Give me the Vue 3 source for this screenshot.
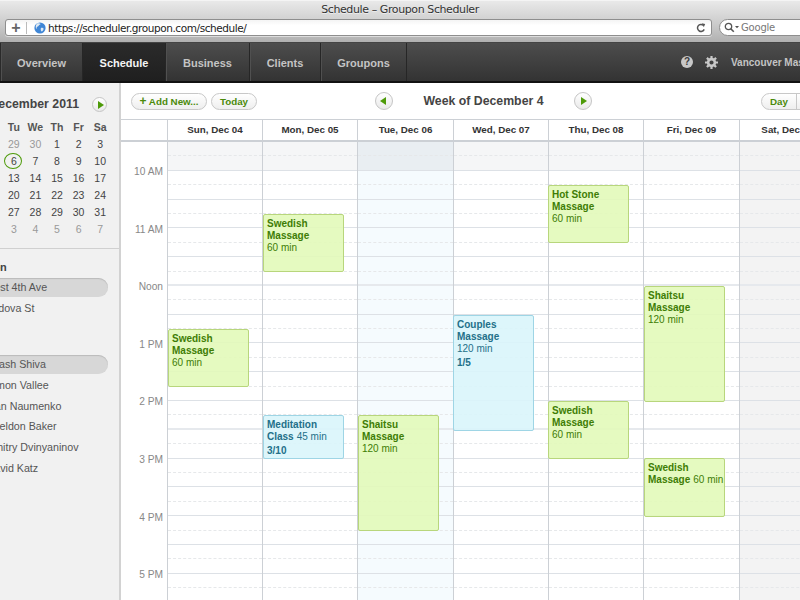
<script setup>
const tabs = [
  { label: 'Overview', w: 82 },
  { label: 'Schedule', w: 83, active: true },
  { label: 'Business', w: 84 },
  { label: 'Clients', w: 71 },
  { label: 'Groupons', w: 86 },
]
const weekdays = ['Tu', 'We', 'Th', 'Fr', 'Sa']
const calRows = [
  [[29, 1], [30, 1], [1], [2], [3]],
  [[6, 0, 1], [7], [8], [9], [10]],
  [[13], [14], [15], [16], [17]],
  [[20], [21], [22], [23], [24]],
  [[27], [28], [29], [30], [31]],
  [[3, 1], [4, 1], [5, 1], [6, 1], [7, 1]],
]
const staff = ['Akash Shiva', 'Simon Vallee', 'Ivan Naumenko', 'Sheldon Baker', 'Dmitry Dvinyaninov', 'David Katz']
const hours = ['10 AM', '11 AM', 'Noon', '1 PM', '2 PM', '3 PM', '4 PM', '5 PM']
const rows = Array.from({ length: 32 }, (_, i) => i)
const rowClass = (i) => (i === 9 || i === 19 ? 'solid thick' : i % 2 ? 'solid' : 'dash')

const days = [
  { name: 'Sun, Dec 04', w: 95, shift: 0, events: [{ l1: 'Swedish', l2: 'Massage', l3: '60 min', y: 329, h: 58 }] },
  { name: 'Mon, Dec 05', w: 95, shift: 0, events: [
    { l1: 'Swedish', l2: 'Massage', l3: '60 min', y: 214, h: 58 },
    { l1: 'Meditation', l2: 'Class', inl: '45 min', x: '3/10', y: 415, h: 44, blue: true },
  ] },
  { name: 'Tue, Dec 06', w: 96, shift: 0, today: true, events: [{ l1: 'Shaitsu', l2: 'Massage', l3: '120 min', y: 415, h: 116 }] },
  { name: 'Wed, Dec 07', w: 95, shift: -1, events: [{ l1: 'Couples', l2: 'Massage', l3: '120 min', x: '1/5', y: 315, h: 116, blue: true }] },
  { name: 'Thu, Dec 08', w: 95, shift: -1, events: [
    { l1: 'Hot Stone', l2: 'Massage', l3: '60 min', y: 185, h: 58 },
    { l1: 'Swedish', l2: 'Massage', l3: '60 min', y: 401, h: 58 },
  ] },
  { name: 'Fri, Dec 09', w: 96, shift: 0, events: [
    { l1: 'Shaitsu', l2: 'Massage', l3: '120 min', y: 286, h: 116 },
    { l1: 'Swedish', l2: 'Massage', inl: '60 min', y: 458, h: 59 },
  ] },
  { name: 'Sat, Dec 10', w: 96, shift: 0, off: true, events: [] },
]
const GRID_TOP = 142
</script>

<template>
  <div class="page">
    <header class="browser">
      <div class="title">Schedule – Groupon Scheduler</div>
      <div class="browser-row">
        <div class="address">
          <span class="plus">+</span>
          <span class="addr-sep"></span>
          <svg class="globe" width="12" height="12" viewBox="0 0 12 12">
            <circle cx="6" cy="6" r="5.6" fill="#3f86d6" />
            <path d="M3 1.6c1.5-.6 3-.4 3.6.3-.4.8-1.5.6-1.8 1.5-.3 1-1.6.9-2 1.9-.3.7.2 1.4-.6 1.6C1.400 5.400 1.700 3 3 1.600zM7 6c1-.5 2.200 0 2.600.7-.1 1.200-1.100 2.500-2 2.800-.9-.5-1.200-2.700-.6-3.500z" fill="#dfe9f2" />
          </svg>
          <span class="url">https://scheduler.groupon.com/schedule/</span>
          <svg class="reload" width="10" height="10" viewBox="0 0 10 10">
            <path d="M8.200 6.400A3.500 3.500 0 1 1 7.300 2.300" fill="none" stroke="#555" stroke-width="1.500" />
            <path d="M5.800 0.200 9.200 0.900 7.800 4.200z" fill="#555" />
          </svg>
        </div>
        <div class="search">
          <svg width="15" height="11" viewBox="0 0 15 11">
            <circle cx="4.500" cy="4.500" r="3.200" fill="none" stroke="#555" stroke-width="1.300" />
            <path d="M7 7l2.800 2.800" stroke="#555" stroke-width="1.600" />
            <path d="M11 4h4l-2 2.300z" fill="#555" />
          </svg>
          <span>Google</span>
        </div>
      </div>
    </header>

    <nav class="nav">
      <div class="nav-start"></div>
      <a v-for="t in tabs" :key="t.label" class="tab" :class="{ active: t.active }" :style="{ width: t.w + 'px' }">{{ t.label }}</a>
      <div class="nav-right">
        <span class="help">?</span>
        <svg class="gear" width="13" height="13" viewBox="0 0 13 13">
          <circle cx="6.500" cy="6.500" r="3.400" fill="none" stroke="#c8c8c8" stroke-width="2.600" />
          <path d="M6.500 0v13M0 6.500h13M1.900 1.900l9.200 9.200M11.100 1.900l-9.200 9.200" stroke="#c8c8c8" stroke-width="2.200" stroke-dasharray="2.400 8.200" />
        </svg>
        <span class="account">Vancouver Massage</span>
      </div>
    </nav>

    <main class="main">
      <aside class="sidebar">
        <div class="cal-head">
          <span class="month">December 2011</span>
          <span class="round small"><i class="arrow right"></i></span>
        </div>
        <div class="cal-grid">
          <span v-for="d in weekdays" :key="d" class="wd">{{ d }}</span>
          <template v-for="(r, ri) in calRows" :key="ri">
            <span v-for="(c, ci) in r" :key="ci" class="day" :class="{ dim: c[1], sel: c[2] }">{{ c[0] }}</span>
          </template>
        </div>
        <div class="side-rule"></div>
        <div class="side-h">Location</div>
        <div class="pill-row on loc-a">West 4th Ave</div>
        <div class="pill-row loc-b">Cordova St</div>
        <div class="side-gap"></div>
        <div v-for="(s, i) in staff" :key="s" class="pill-row" :class="{ on: i === 0 }">{{ s }}</div>
      </aside>

      <section class="content">
        <div class="toolbar">
          <button class="btn add"><b>+</b> Add New...</button>
          <button class="btn today">Today</button>
          <div class="week-nav">
            <span class="round"><i class="arrow left"></i></span>
            <h1>Week of December 4</h1>
            <span class="round"><i class="arrow right"></i></span>
          </div>
          <div class="seg">
            <span class="seg-on">Day</span>
            <span class="seg-rest"></span>
          </div>
        </div>

        <div class="heads">
          <div class="time-head"></div>
          <div v-for="d in days" :key="d.name" class="head" :style="{ width: d.w + 'px' }">{{ d.name }}</div>
        </div>

        <div class="body">
          <div class="times">
            <div v-for="h in hours" :key="h" class="time">{{ h }}</div>
          </div>
          <div v-for="d in days" :key="d.name" class="col" :class="{ today: d.today, off: d.off }" :style="{ width: d.w + 'px' }">
            <div class="early"></div>
            <div v-for="i in rows" :key="i" class="row" :class="rowClass(i)"></div>
            <div
              v-for="e in d.events"
              :key="e.y"
              class="event"
              :class="{ blue: e.blue }"
              :style="{ top: (e.y - GRID_TOP) + 'px', height: e.h + 'px', left: d.shift + 'px' }"
            >
              <div class="ev-t">{{ e.l1 }}</div>
              <div class="ev-t">{{ e.l2 }}<span v-if="e.inl" class="ev-inl">{{ e.inl }}</span></div>
              <div v-if="e.l3" class="ev-d">{{ e.l3 }}</div>
              <div v-if="e.x" class="ev-x">{{ e.x }}</div>
            </div>
          </div>
        </div>
      </section>
    </main>
  </div>
</template>

<style scoped>
.page {
  width: 800px;
  height: 600px;
  overflow: hidden;
  display: flex;
  flex-direction: column;
  font-family: "Liberation Sans", Arial, sans-serif;
  background: #fff;
}
.browser {
  height: 42px;
  flex: none;
  box-sizing: border-box;
  background: linear-gradient(#e9e9e9, #c9c9c9 60%, #b0b0b0);
  border-top: 1px solid #f4f4f4;
  overflow: hidden;
}
.title {
  text-align: center;
  font: 11px/17px "DejaVu Sans", sans-serif;
  letter-spacing: -.4px;
  color: #333;
  text-shadow: 0 1px 0 #eee;
}
.browser-row {
  display: flex;
  gap: 7px;
  padding: 1px 0 0 5px;
}
.address {
  width: 707px;
  height: 17px;
  box-sizing: border-box;
  flex: none;
  display: flex;
  align-items: center;
  background: linear-gradient(#f4f4f4, #fff 35%);
  border: 1px solid #8e8e8e;
  border-radius: 3px;
  box-shadow: 0 1px 0 #ddd;
}
.plus { width: 20px; text-align: center; font: bold 16px/14px "Liberation Sans", sans-serif; color: #666; }
.addr-sep { width: 1px; height: 12px; background: #bbb; margin-right: 7px; }
.globe { flex: none; margin-right: 2px; }
.url {
  font: 10.500px/14px "DejaVu Sans", sans-serif;
  letter-spacing: -.42px;
  color: #222;
  flex: 1;
}
.reload { margin-right: 5px; flex: none; }
.search {
  flex: none;
  width: 120px;
  height: 17px;
  box-sizing: border-box;
  border: 1px solid #8e8e8e;
  border-radius: 9px;
  background: #fff;
  display: flex;
  align-items: center;
  gap: 2px;
  padding-left: 4px;
  font: 10px/14px "DejaVu Sans", sans-serif;
  letter-spacing: -.2px;
  color: #777;
}
.nav {
  height: 41px;
  flex: none;
  box-sizing: border-box;
  display: flex;
  background: linear-gradient(#4d4d4d, #333);
  border-bottom: 2px solid #111;
  border-top: 1px solid #444;
}
.nav-start { width: 1px; background: #2a2a2a; flex: none; }
.tab {
  flex: none;
  box-sizing: border-box;
  border-right: 1px solid #262626;
  box-shadow: inset 1px 0 0 #505050;
  font-weight: bold;
  font-size: 11px;
  line-height: 40px;
  text-align: center;
  color: #c4c4c4;
}
.tab.active {
  background: linear-gradient(#2b2b2b, #1f1f1f);
  box-shadow: none;
  color: #f4f4f4;
}
.nav-right {
  flex: 1;
  min-width: 0;
  display: flex;
  align-items: center;
  padding-left: 274px;
  white-space: nowrap;
}
.help {
  width: 12px;
  height: 12px;
  border-radius: 50%;
  background: #c8c8c8;
  color: #3b3b3b;
  font: bold 10px/12px "Liberation Sans", sans-serif;
  text-align: center;
  flex: none;
}
.gear { margin-left: 12px; flex: none; }
.account { margin-left: 13px; font-weight: bold; font-size: 10px; color: #c4c4c4; }
.main { flex: 1; display: flex; min-height: 0; }
.sidebar {
  width: 121px;
  flex: none;
  box-sizing: border-box;
  border-right: 2px solid #d2d2d2;
  background: #f1f1f1;
  overflow: hidden;
  white-space: nowrap;
}
.cal-head {
  height: 36px;
  box-sizing: border-box;
  padding-top: 14px;
  display: flex;
  justify-content: flex-end;
  align-items: flex-start;
  padding-right: 12px;
  gap: 13px;
}
.month { font-weight: bold; font-size: 12.300px; line-height: 15px; color: #444; }
.round {
  width: 18px;
  height: 18px;
  box-sizing: border-box;
  flex: none;
  border: 1px solid #c5c5c5;
  border-radius: 50%;
  background: linear-gradient(#fff, #e9e9e9);
  display: flex;
  align-items: center;
  justify-content: center;
}
.round.small { width: 15px; height: 15px; }
.arrow { width: 0; height: 0; border-top: 4px solid transparent; border-bottom: 4px solid transparent; }
.arrow.right { border-left: 6px solid #4d9a08; margin-left: 2px; }
.arrow.left { border-right: 6px solid #4d9a08; margin-right: 2px; }
.cal-grid {
  display: grid;
  grid-template-columns: repeat(5, 21.600px);
  grid-auto-rows: 17px;
  margin-left: 3px;
  text-align: center;
  font-size: 10.500px;
  line-height: 17px;
}
.wd { font-weight: bold; color: #555; }
.day { color: #444; position: relative; }
.day.dim { color: #999; }
.day.sel::before {
  content: "";
  position: absolute;
  left: 1px;
  top: 0;
  box-sizing: border-box;
  width: 18px;
  height: 16px;
  border: 1.500px solid #4d9a08;
  border-radius: 50%;
}
.side-rule { height: 1px; background: #d0d0d0; margin-top: 10px; }
.side-h {
  margin: 12px 0 4px -39px;
  font-weight: bold;
  font-size: 11px;
  line-height: 13px;
  color: #444;
}
.pill-row {
  height: 19px;
  margin: 0 11px 1.700px -13.500px;
  font-size: 10.700px;
  line-height: 19px;
  color: #555;
  border-radius: 0 10px 10px 0;
}
.pill-row.on {
  background: #d7d7d7;
  box-shadow: inset 0 1px 1px #bbb;
}
.loc-a { margin-left: -15.500px; }
.loc-b { margin-left: -19px; }
.side-gap { height: 36px; }
.content { flex: 1; min-width: 0; display: flex; flex-direction: column; }
.toolbar {
  height: 37px;
  flex: none;
  box-sizing: border-box;
  border-bottom: 1px solid #ccd0d5;
  display: flex;
  align-items: center;
  padding-left: 10px;
  gap: 4px;
  position: relative;
}
.btn {
  height: 17px;
  padding: 0;
  border: 1px solid #c8c8c8;
  border-radius: 9px;
  background: linear-gradient(#fff, #eee);
  color: #4a8a0a;
  font: bold 9.800px/15px "Liberation Sans", sans-serif;
}
.btn b { font-size: 12px; }
.add { width: 76px; }
.today { width: 46px; }
.week-nav {
  display: flex;
  align-items: center;
  margin-left: 114px;
}
.week-nav h1 {
  margin: 0;
  width: 181px;
  text-align: center;
  font-size: 12.300px;
  font-weight: bold;
  color: #444;
  white-space: nowrap;
}
.seg {
  position: absolute;
  left: 640px;
  top: 10px;
  width: 60px;
  height: 17px;
  box-sizing: border-box;
  border: 1px solid #c8c8c8;
  border-radius: 9px 0 0 9px;
  display: flex;
  background: linear-gradient(#fff, #eee);
}
.seg-on {
  width: 34px;
  border-right: 1px solid #c8c8c8;
  text-align: center;
  font: bold 9.800px/15px "Liberation Sans", sans-serif;
  color: #4a8a0a;
}
.heads {
  height: 22px;
  flex: none;
  box-sizing: border-box;
  display: flex;
  border-bottom: 2px solid #ccd0d5;
}
.time-head { width: 46px; flex: none; }
.head {
  flex: none;
  box-sizing: border-box;
  border-left: 1px solid #ccd0d5;
  text-align: center;
  font-weight: bold;
  font-size: 9.800px;
  line-height: 20px;
  color: #333;
  white-space: nowrap;
}
.body { flex: 1; min-height: 0; display: flex; overflow: hidden; }
.times { width: 46px; flex: none; padding-top: 1px; }
.time {
  height: 57.600px;
  line-height: 57.600px;
  text-align: right;
  padding-right: 4px;
  font-size: 10.200px;
  color: #888;
}
.col {
  flex: none;
  box-sizing: border-box;
  position: relative;
  border-left: 1px solid #ccd0d5;
}
.early {
  position: absolute;
  left: 0;
  right: 0;
  top: 0;
  height: 28.800px;
  background: #f5f6f7;
}
.col.today { background: #f5fbfe; }
.col.today .early { background: #e9eef2; }
.col.off { background: #f3f3f3; }
.col.off .early { background: #f3f3f3; }
.row { height: 14.400px; box-sizing: border-box; position: relative; }
.row.solid { border-bottom: 1px solid #dde1e6; }
.row.thick { border-bottom: 2px solid #e6e9ed; }
.row.dash { border-bottom: 1px dashed #e6e8ea; }
.event {
  position: absolute;
  width: 81px;
  box-sizing: border-box;
  padding: 3px 3px;
  border: 1px solid #b8d67c;
  border-radius: 2px;
  background: rgba(226, 250, 185, .9);
  color: #3e7d05;
  font-size: 10px;
  line-height: 12px;
  white-space: nowrap;
}
.ev-t { font-weight: bold; }
.ev-inl { font-weight: normal; margin-left: 3px; }
.ev-x { font-weight: bold; margin-top: 2px; }
.event.blue {
  border-color: #9ed5e5;
  background: rgba(217, 245, 251, .9);
  color: #237089;
}
</style>

<style>
html, body { margin: 0; padding: 0; background: #fff; }
</style>
